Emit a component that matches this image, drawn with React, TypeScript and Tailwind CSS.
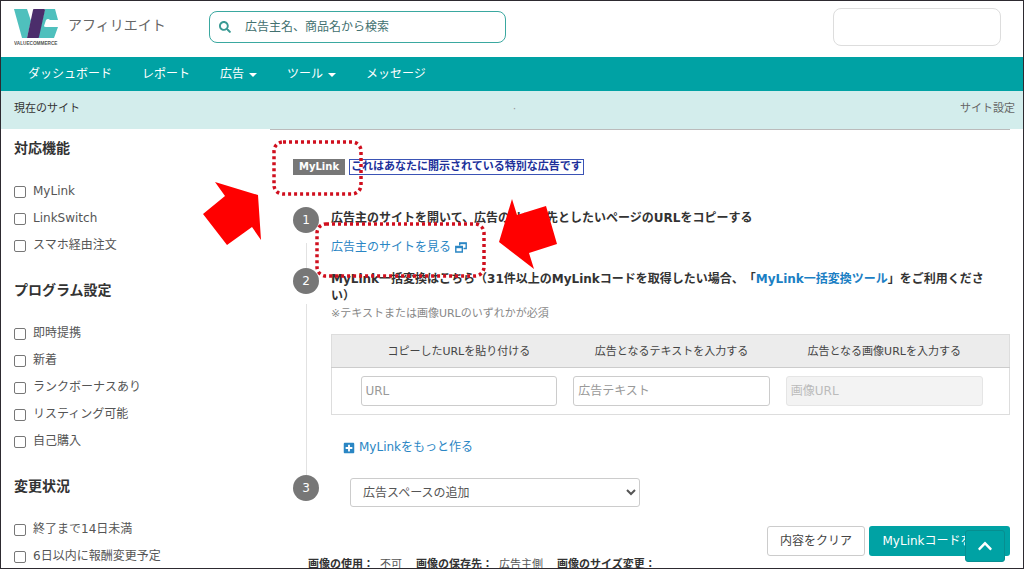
import type { ReactNode } from "react";
import { FaChevronUp, FaPlusSquare, FaSearch } from "react-icons/fa";

const navItems = [
  { label: "ダッシュボード" },
  { label: "レポート" },
  { label: "広告", menu: true },
  { label: "ツール", menu: true },
  { label: "メッセージ" },
];

const filters = [
  { title: "対応機能", options: ["MyLink", "LinkSwitch", "スマホ経由注文"] },
  {
    title: "プログラム設定",
    options: ["即時提携", "新着", "ランクボーナスあり", "リスティング可能", "自己購入"],
  },
  { title: "変更状況", options: ["終了まで14日未満", "6日以内に報酬変更予定"] },
];

const fields = [
  { id: "url", title: "コピーしたURLを貼り付ける", placeholder: "URL" },
  { id: "text", title: "広告となるテキストを入力する", placeholder: "広告テキスト" },
  { id: "image", title: "広告となる画像URLを入力する", placeholder: "画像URL", disabled: true },
];

const details = [
  { term: "画像の使用：", value: "不可" },
  { term: "画像の保存先：", value: "広告主側" },
  { term: "画像のサイズ変更：", value: "" },
];

function Logo() {
  return (
    <svg viewBox="0 0 44 38" className="h-[38px] w-11 shrink-0" role="img" aria-label="VALUECOMMERCE">
      <path d="M0 1h13l4 12-4 17H8z" fill="#4fc0bd" />
      <path d="M31 1h10l3 11h-8q-2-2-4 0l-2 6q0 1 2 1h12l-4 11H24z" fill="#4fc0bd" />
      <path d="M20 1h10q1 0 1 1l-6 27q0 1-1 1H13l6-28q0-1 1-1z" fill="#4b2d6b" />
      <path d="M44 12.500H35q-2 0-3 5.500h12z" fill="#fff" />
      <text x="0" y="37" fontSize="4.7" fontWeight="700" fill="#555" fontFamily="Liberation Sans, sans-serif">
        VALUECOMMERCE
      </text>
    </svg>
  );
}

function WindowsIcon() {
  return (
    <svg
      viewBox="0 0 12 11"
      className="h-[11px] w-3"
      fill="none"
      stroke="#2a86c4"
      strokeWidth="1.4"
      aria-hidden="true"
    >
      <path d="M4.7 3.500V1h6.500v5.500H8.500" />
      <path d="M4.7 1.500h6.500" />
      <path d="M.8 4.500h6.500v5.500H.8z" />
      <path d="M.8 5.200h6.500" strokeWidth="2" />
    </svg>
  );
}

function Step({ number, last, children }: { number: number; last?: boolean; children: ReactNode }) {
  return (
    <li className="flex gap-3">
      <div className="flex w-[26px] shrink-0 flex-col items-center">
        <span className="flex size-[26px] items-center justify-center rounded-full bg-[#777] text-xs text-white">
          {number}
        </span>
        {!last && <span className="mt-2.5 w-px flex-1 bg-[#e2e2e2]" />}
      </div>
      <div className="min-w-0 flex-1 pt-[3px]">{children}</div>
    </li>
  );
}

function FilterPanel() {
  return (
    <aside className="w-64 shrink-0 pt-[9px]">
      {filters.map((group) => (
        <fieldset key={group.title} className="mb-[22px]">
          <legend className="mb-[19px] text-sm leading-5 font-bold text-[#333]">{group.title}</legend>
          {group.options.map((option) => (
            <label key={option} className="flex h-[27px] items-center gap-[7px] text-xs text-[#555]">
              <input
                type="checkbox"
                className="mt-[3px] size-3 appearance-none rounded-xs border border-[#777] bg-white"
              />
              {option}
            </label>
          ))}
        </fieldset>
      ))}
    </aside>
  );
}

function LinkTable() {
  return (
    <table className="mt-3 w-full table-fixed border border-[#ddd]">
      <thead>
        <tr className="h-[33px] border-b border-[#ccc] bg-[#ececec] text-[11px] text-[#444]">
          <td className="w-[21px]" />
          {fields.map((field) => (
            <th key={field.id} className="font-normal">
              <label htmlFor={field.id}>{field.title}</label>
            </th>
          ))}
          <td className="w-[19px]" />
        </tr>
      </thead>
      <tbody>
        <tr className="h-[47px]">
          <td />
          {fields.map((field) => (
            <td key={field.id} className="px-2">
              <input
                id={field.id}
                type="text"
                disabled={field.disabled}
                placeholder={field.placeholder}
                className="block h-[30px] w-full rounded-[3px] border border-[#ccc] px-1 text-xs placeholder:text-[#999] disabled:border-[#e5e5e5] disabled:bg-[#f3f3f3] disabled:placeholder:text-[#bbb]"
              />
            </td>
          ))}
          <td />
        </tr>
      </tbody>
    </table>
  );
}

function DottedFrame({ width }: { width: number }) {
  return (
    <svg width={width} height={56} fill="none" aria-hidden="true">
      <rect
        x="2"
        y="2"
        width={width - 4}
        height="52"
        rx="9"
        stroke="#d00f1e"
        strokeWidth="3.500"
        strokeDasharray="3 3"
      />
    </svg>
  );
}

// Callout frames and arrows laid over the guide
function Annotations() {
  return (
    <div className="pointer-events-none absolute inset-0">
      <div className="absolute top-[139px] left-[271px]">
        <DottedFrame width={91} />
      </div>
      <div className="absolute top-[221px] left-[314px]">
        <DottedFrame width={171} />
      </div>
      <svg viewBox="0 0 60 66" className="absolute top-[180px] left-[201px] h-[66px] w-[60px]">
        <path d="M56 14 13 1l10 14L1 33l24 31 25-18 9 13z" fill="#f00" />
      </svg>
      <svg viewBox="0 0 60 72" className="absolute top-[197px] left-[497px] h-[72px] w-[60px]">
        <path d="M14 1l5 16 29-9 11 38-28 9 5 16L1 44z" fill="#f00" />
      </svg>
    </div>
  );
}

export default function App() {
  return (
    <div
      lang="ja"
      className="relative flex h-screen flex-col overflow-hidden border border-[#2d2a30] bg-white font-['DejaVu_Sans','Noto_Sans_CJK_JP',sans-serif] text-xs text-[#333] [text-spacing-trim:space-all]"
    >
      <header className="flex h-14 shrink-0 items-center pr-[22px] pb-1 pl-[13px]">
        <Logo />
        <span className="ml-2.5 w-[141px] pb-1 text-sm text-[#666]">アフィリエイト</span>
        <label className="flex h-8 w-[297px] items-center gap-3.5 rounded-lg border border-[#3aa8a0] px-[9px] text-[#3a9a94]">
          <FaSearch className="size-3 shrink-0" />
          <input
            type="search"
            aria-label="検索"
            placeholder="広告主名、商品名から検索"
            className="min-w-0 flex-1 outline-none placeholder:text-[#42706f]"
          />
        </label>
        <div className="ml-auto h-[38px] w-[168px] rounded-lg border border-[#ddd]" />
      </header>

      <nav className="flex h-[34px] shrink-0 items-center gap-[30px] bg-[#00a2a4] px-[27px] text-white">
        {navItems.map((item) => (
          <a key={item.label} href="#" className="flex items-center gap-[5px]">
            {item.label}
            {item.menu && (
              <span className="mt-px border-x-4 border-t-4 border-x-transparent border-t-white" />
            )}
          </a>
        ))}
      </nav>

      <div className="grid h-[38px] shrink-0 grid-cols-3 items-center bg-[#d3edec] pr-2 pb-0.5 pl-[13px] text-[11px]">
        <span>現在のサイト</span>
        <span className="text-center text-[#999]">·</span>
        <a href="#" className="justify-self-end text-[#666]">サイト設定</a>
      </div>

      <div className="flex px-[13px]">
        <FilterPanel />

        <main className="min-w-0 flex-1 border-t border-[#bbb]">
          <div className="flex gap-1 pt-[29px] pl-[23px] leading-4 font-bold">
            <span className="bg-[#777] px-1.5 text-[10px] text-white">MyLink</span>
            <span className="border border-[#3b53b5] px-px text-[11px] leading-[14px] text-[#20309a]">
              これはあなたに開示されている特別な広告です
            </span>
          </div>

          <ol className="mt-8 pl-[23px] leading-[17px]">
            <Step number={1}>
              <p className="font-bold">広告主のサイトを開いて、広告のリンク先としたいページのURLをコピーする</p>
              <a href="#" className="mt-3 mb-3 flex items-center gap-1 text-[#2a86c4]">
                広告主のサイトを見る
                <WindowsIcon />
              </a>
            </Step>
            <Step number={2}>
              <p className="pr-3 font-bold">
                MyLink一括変換はこちら（31件以上のMyLinkコードを取得したい場合、「
                <a href="#" className="text-[#1b80c4]">MyLink一括変換ツール</a>
                」をご利用ください）
              </p>
              <p className="text-[11px] text-[#888]">※テキストまたは画像URLのいずれかが必須</p>
              <LinkTable />
              <button type="button" className="mt-6 mb-[19px] ml-3 flex items-center gap-1 text-[#2a86c4]">
                <FaPlusSquare className="size-3" />
                MyLinkをもっと作る
              </button>
            </Step>
            <Step number={3} last>
              <select
                aria-label="広告スペース"
                className="ml-[19px] block h-[29px] w-[290px] rounded-[3px] border border-[#ccc] bg-white px-2 text-[#555]"
              >
                <option>広告スペースの追加</option>
              </select>
            </Step>
          </ol>

          <div className="mt-[19px] flex justify-end gap-1">
            <button type="button" className="h-[30px] rounded-[3px] border border-[#ccc] px-3 text-[#444]">
              内容をクリア
            </button>
            <button type="button" className="h-[30px] w-[141px] rounded-[3px] bg-[#00a2a4] text-white">
              MyLinkコードを取得
            </button>
          </div>

          <dl className="flex gap-3.5 pl-[38px] text-[11px] leading-[17px] whitespace-nowrap">
            {details.map((item) => (
              <div key={item.term} className="flex gap-1.5">
                <dt className="font-bold">{item.term}</dt>
                <dd className="text-[#555]">{item.value}</dd>
              </div>
            ))}
          </dl>
        </main>
      </div>

      <Annotations />

      <button
        type="button"
        aria-label="ページの先頭へ"
        className="absolute right-[18px] bottom-1.5 flex h-8 w-10 items-center justify-center rounded-[3px] border border-[#078e90] bg-[#00a2a4] text-white"
      >
        <FaChevronUp className="size-4" />
      </button>
    </div>
  );
}
